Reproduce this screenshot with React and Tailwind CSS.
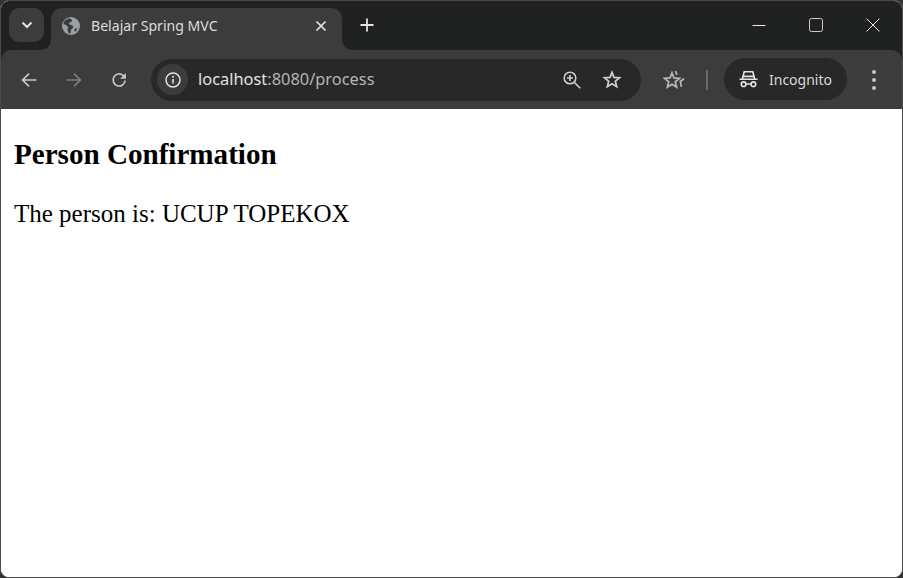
import React from 'react';

const uiFont = 'font-["Noto_Sans",sans-serif]';

function Chevron() {
  return (
    <svg width="12" height="8" viewBox="0 0 12 8" fill="none" stroke="#e3e3e3" strokeWidth="2">
      <path d="M1.5 1.5 6 6l4.5-4.5" />
    </svg>
  );
}

function Globe() {
  return (
    <svg width="18" height="18" viewBox="0 0 18 18">
      <circle cx="9" cy="9" r="9" fill="#9aa0a6" />
      <path d="M7.5 1.2 3 3.2 1.2 7l3.4 1.2 1.6 2.6-.8 1.6 1.4 4.2 1.6-.4.6-3.4 2.2-2-.6-2.2L7 7.2l.4-1.7 2-.4.8-2.2z" fill="#3c3c3c" />
      <path d="M13 11.5h2.6l-2.4 3.6-1-1.6z" fill="#3c3c3c" />
    </svg>
  );
}

function Back({ color = '#c7c7c7', flip }) {
  return (
    <svg width="16" height="16" viewBox="0 0 16 16" fill="none" stroke={color} strokeWidth="1.7" className={flip ? 'rotate-180' : ''}>
      <path d="M15.5 8H1.6M8 1.6 1.6 8 8 14.4" />
    </svg>
  );
}

function Reload() {
  return (
    <svg width="16" height="16" viewBox="0 0 17 17" fill="none" stroke="#c7c7c7" strokeWidth="1.8">
      <path d="M15 9a6.4 6.4 0 1 1-2-5.2L15 6" />
      <path d="M15.8 1v6.2H9.6z" fill="#c7c7c7" stroke="none" />
    </svg>
  );
}

function Info() {
  return (
    <svg width="16" height="16" viewBox="0 0 16 16" fill="none">
      <circle cx="8" cy="8" r="7" stroke="#e3e3e3" strokeWidth="1.5" />
      <path d="M8 7v4.6" stroke="#e3e3e3" strokeWidth="1.6" />
      <circle cx="8" cy="4.8" r="1" fill="#e3e3e3" />
    </svg>
  );
}

function ZoomIn() {
  return (
    <svg width="18" height="18" viewBox="0 0 18 18" fill="none" stroke="#d0d0d0" strokeWidth="1.6">
      <circle cx="7" cy="7" r="5.8" />
      <path d="M11 11l6.2 6.2M7 4v6M4 7h6" />
    </svg>
  );
}

function Star() {
  return (
    <svg width="20" height="19" viewBox="0 0 20 19" fill="none" stroke="#d0d0d0" strokeWidth="1.7" strokeLinejoin="miter">
      <path d="M10 2.4 12 7.4l5.5.4-4.2 3.5 1.4 5.3L10 13.7l-4.7 2.9 1.4-5.3L2.5 7.8 8 7.4z" />
    </svg>
  );
}

function ReadingStars() {
  return (
    <svg width="22" height="20" viewBox="0 0 22 20" fill="none" stroke="#b5b5b5" strokeWidth="1.8">
      <path d="M9 3 11 8l5.4.4-4.1 3.4 1.3 5.3L9 14.2l-4.6 2.9 1.3-5.3L1.6 8.4 7 8z" />
      <path d="M12.4 1l1.5 3.8M21 8.8l-3.6 2.6 1 5.4" />
    </svg>
  );
}

function Spy() {
  return (
    <svg width="19" height="17" viewBox="0 0 19 17" fill="none" stroke="#e3e3e3" strokeWidth="1.6">
      <path d="M0.5 8.2h18" />
      <path d="M3.4 8l1.8-7.2h8.6L15.6 8" />
      <path d="M3.6 5.4h11.8" />
      <circle cx="4.6" cy="13.2" r="2.3" />
      <circle cx="14.4" cy="13.2" r="2.3" />
      <path d="M6.9 13h5.2" />
    </svg>
  );
}

function WindowControls() {
  return (
    <div className="ml-auto flex items-center h-[34px] pr-[22px] gap-[43px]">
      <svg width="14" height="14" viewBox="0 0 14 14" stroke="#e8e8e8" strokeWidth="1">
        <path d="M0.5 7.5h13" />
      </svg>
      <svg width="14" height="14" viewBox="0 0 14 14" fill="none" stroke="#c8c8c8" strokeWidth="1">
        <rect x="0.5" y="0.5" width="13" height="13" rx="2" />
      </svg>
      <svg width="14" height="14" viewBox="0 0 14 14" stroke="#e8e8e8" strokeWidth="1">
        <path d="M0.5 0.5l13 13M13.5 0.5l-13 13" />
      </svg>
    </div>
  );
}

function TabStrip() {
  return (
    <div className="flex items-start h-[49px] pt-[7px] pl-2 bg-[#202222]">
      <div className="flex items-center justify-center w-[35px] h-[34px] rounded-[10px] bg-[#3c3c3c]">
        <Chevron />
      </div>
      <div className="relative flex items-center w-[291px] h-[42px] ml-[7px] pl-[11px] pr-[15px] pb-[7px] rounded-t-[11px] bg-[#3c3c3c]">
        {/* concave corners where the tab meets the toolbar */}
        <div className="absolute -left-[10px] bottom-0 w-[10px] h-[10px] bg-[#3c3c3c]">
          <div className="w-full h-full rounded-br-[10px] bg-[#202222]" />
        </div>
        <div className="absolute -right-[10px] bottom-0 w-[10px] h-[10px] bg-[#3c3c3c]">
          <div className="w-full h-full rounded-bl-[10px] bg-[#202222]" />
        </div>
        <Globe />
        <span className={`ml-[11px] text-[14.1px] text-[#dcdcdc] ${uiFont}`}>Belajar Spring MVC</span>
        <svg className="ml-auto" width="12" height="12" viewBox="0 0 12 12" stroke="#e3e3e3" strokeWidth="1.7">
          <path d="M1.5 1.5l9 9M10.5 1.5l-9 9" />
        </svg>
      </div>
      <svg className="ml-[18px] mt-[10px]" width="14" height="14" viewBox="0 0 14 14" stroke="#e3e3e3" strokeWidth="1.8">
        <path d="M7 0.5v13M0.5 7h13" />
      </svg>
      <WindowControls />
    </div>
  );
}

function Toolbar() {
  return (
    <div className="bg-[#202222]">
      <div className="flex items-center h-[59px] pl-[20px] rounded-t-[10px] bg-[#3c3c3c]">
        <Back />
        <div className="ml-[29px]"><Back color="#7d7d7d" flip /></div>
        <div className="ml-[29px]"><Reload /></div>
        <div className="flex items-center w-[490px] h-[42px] ml-[24px] pl-[6px] pr-[19px] rounded-full bg-[#282828]">
          <div className="flex items-center justify-center w-[31px] h-[31px] rounded-full bg-[#3c3c3c]">
            <Info />
          </div>
          <span className={`ml-[10px] text-[16.4px] text-[#e3e3e3] ${uiFont}`}>
            localhost<span className="text-[#b4b4b4]">:8080/process</span>
          </span>
          <div className="ml-auto flex items-center gap-[21px]">
            <ZoomIn />
            <Star />
          </div>
        </div>
        <div className="ml-[22px]"><ReadingStars /></div>
        <div className="w-[2px] h-[20px] ml-[21px] bg-[#6a6a6a]" />
        <div className="flex items-center w-[123px] h-[42px] ml-[16px] mb-[1px] pl-[15px] rounded-full bg-[#282828]">
          <Spy />
          <span className={`ml-[11px] text-[14px] text-[#d8d8d8] ${uiFont}`}>Incognito</span>
        </div>
        <div className="flex flex-col gap-[4px] ml-[25px]">
          <div className="w-[4px] h-[4px] rounded-full bg-[#c7c7c7]" />
          <div className="w-[4px] h-[4px] rounded-full bg-[#c7c7c7]" />
          <div className="w-[4px] h-[4px] rounded-full bg-[#c7c7c7]" />
        </div>
      </div>
    </div>
  );
}

export default function App() {
  return (
    <div className="w-[903px] h-[578px] bg-[#333] overflow-hidden">
      <div className="flex flex-col h-full overflow-hidden rounded-[9px] border border-[#4a4a4a] bg-white">
        <TabStrip />
        <Toolbar />
        <div className='flex-1 px-[13px] pt-[27px] bg-white text-black font-["Liberation_Serif",serif]'>
          <h2 className="text-[29.1px] leading-[36px] font-bold">Person Confirmation</h2>
          <p className="mt-[26px] text-[25px] leading-[32px]">The person is: UCUP TOPEKOX</p>
        </div>
      </div>
    </div>
  );
}
